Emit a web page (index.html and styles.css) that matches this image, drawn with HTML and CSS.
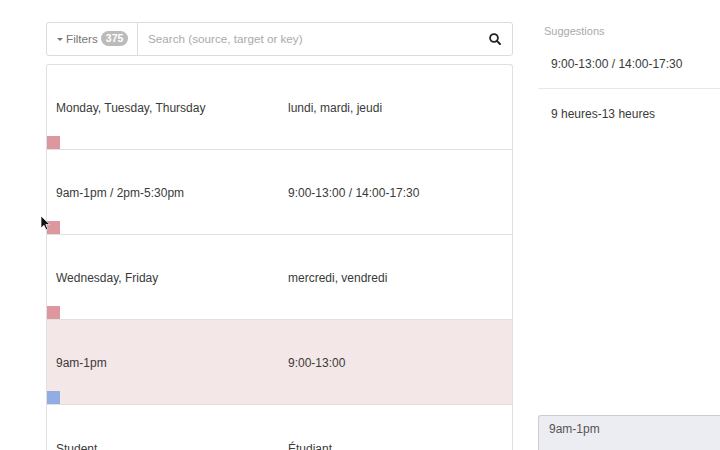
FILE: index.html
```html
<!DOCTYPE html>
<html lang="en">
<head>
<meta charset="utf-8">
<title>Translations</title>
<link rel="stylesheet" href="styles.css">
</head>
<body>
<div class="page">
  <main class="left">
    <div class="searchbar">
      <div class="filters"><span class="caret"></span><span>Filters</span><span class="badge">375</span></div>
      <div class="search"><span>Search (source, target or key)</span>
        <svg class="lens" width="12" height="12" viewBox="0 0 12 12"><circle cx="5" cy="5" r="3.9" fill="none" stroke="#222" stroke-width="1.8"/><path d="M7.9 7.9l3.1 3.1" stroke="#222" stroke-width="2" stroke-linecap="round"/></svg>
      </div>
    </div>
    <div class="list">
      <div class="row"><span>Monday, Tuesday, Thursday</span><span>lundi, mardi, jeudi</span><i class="mark red"></i></div>
      <div class="row"><span>9am-1pm / 2pm-5:30pm</span><span>9:00-13:00 / 14:00-17:30</span><i class="mark red"></i></div>
      <div class="row"><span>Wednesday, Friday</span><span>mercredi, vendredi</span><i class="mark red"></i></div>
      <div class="row active"><span>9am-1pm</span><span>9:00-13:00</span><i class="mark blue"></i></div>
      <div class="row"><span>Student</span><span>Étudiant</span></div>
    </div>
  </main>
  <aside class="right">
    <div class="heading">Suggestions</div>
    <div class="sug first">9:00-13:00 / 14:00-17:30</div>
    <div class="sug">9 heures-13 heures</div>
    <div class="source">9am-1pm</div>
  </aside>
</div>
<svg class="cursor" width="12" height="17" viewBox="0 0 12 17"><path d="M1 1v12l3-2.7 2 4.4 1.8-.8-2-4.3h4z" fill="#111" stroke="#fff" stroke-width=".7"/></svg>
</body>
</html>
```
FILE: styles.css
```css
* { box-sizing: border-box; }
html, body { margin: 0; height: 450px; overflow: hidden; background: #fff; }
body { font: 12px/17px "Liberation Sans", Arial, sans-serif; color: #3a3a3a; position: relative; }
.page { display: flex; height: 450px; padding: 22px 0 0 46px; gap: 25px; overflow: hidden; }
.left { width: 467px; flex: none; }
.searchbar { display: flex; height: 34px; border: 1px solid #dcdcdc; border-radius: 3px; margin-bottom: 8px; font-size: 11.7px; }
.filters { width: 91px; flex: none; display: flex; align-items: center; padding: 0 0 2px 10px; border-right: 1px solid #dcdcdc; color: #777; }
.caret { border: 3px solid transparent; border-top-color: #777; border-bottom: 0; margin: 2px 3px 0 0; }
.badge { margin-left: 3px; background: #bbb; color: #fff; font-weight: bold; font-size: 10.5px; line-height: 15px; height: 15px; padding: 0 5px; border-radius: 8px; }
.search { flex: 1; display: flex; align-items: center; justify-content: space-between; padding: 0 11px 2px 10px; color: #aaa; }
.lens { margin-top: 1px; }
.list { border: 1px solid #e0e0e0; border-bottom: 0; border-radius: 3px 3px 0 0; height: 386px; overflow: hidden; }
.row { position: relative; height: 85px; display: grid; grid-template-columns: 232px 1fr; align-items: center; padding: 3px 0 0 9px; border-bottom: 1px solid #e0e0e0; }
.row:last-child { border-bottom: 0; }
.row.active { background: #f4e7e7; }
.mark { position: absolute; left: 0; bottom: 0; width: 13px; height: 13px; }
.red { background: #dd979f; }
.blue { background: #93ade2; }
.right { flex: 1; min-width: 0; display: flex; flex-direction: column; position: relative; }
.heading { color: #aaa; font-size: 11px; line-height: 14px; padding: 2px 0 0 6px; height: 25px; }
.sug { padding: 9px 0 0 13px; height: 51px; }
.sug.first { height: 42px; border-bottom: 1px solid #e6e8ea; }
.sug:not(.first) { padding-top: 17px; }
.source { position: absolute; left: 0; top: 393px; width: 100%; height: 35px; background: #ececf3; border: 1px solid #ccc; border-right: 0; border-bottom: 0; border-radius: 3px 0 0 0; padding: 5px 10px 0; color: #555; }
.cursor { position: absolute; left: 40px; top: 215px; }
```
